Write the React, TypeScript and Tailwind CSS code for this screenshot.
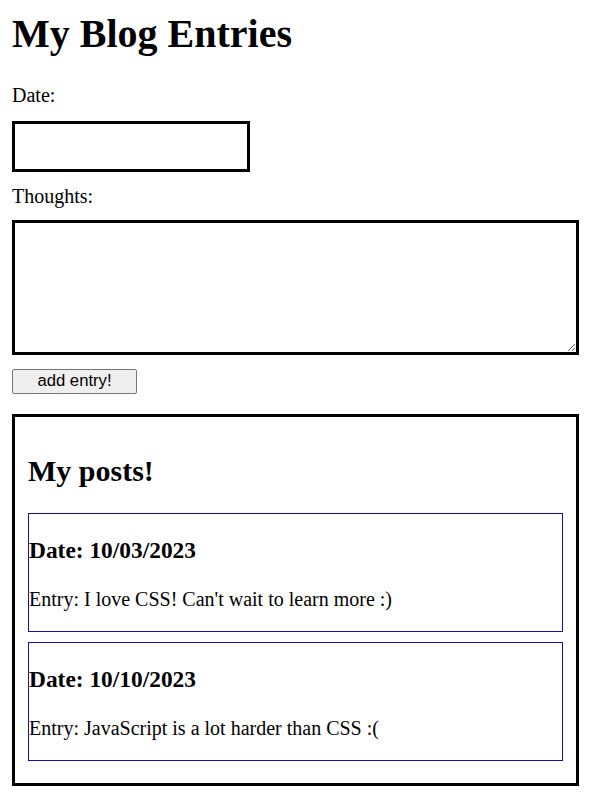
import React from "react";

const posts = [
  { date: "10/03/2023", entry: "I love CSS! Can't wait to learn more :)" },
  { date: "10/10/2023", entry: "JavaScript is a lot harder than CSS :(" },
];

export default function App() {
  return (
    <div className="min-h-[810px] bg-white pl-[12px] pt-[11px] text-black font-['Liberation_Serif','Times_New_Roman',serif]">
      <h1 className="text-[40px] font-bold leading-[46px]">My Blog Entries</h1>
      <label className="mt-[27px] block text-[20px] leading-[23px]">Date:</label>
      <input
        type="text"
        className="mt-[14px] block h-[51px] w-[238px] border-[3px] border-solid border-black bg-white outline-none"
      />
      <label className="mt-[13px] block text-[20px] leading-[23px]">Thoughts:</label>
      <textarea className="mt-[12px] block h-[135px] w-[567px] border-[3px] border-solid border-black bg-white outline-none" />
      <button
        type="button"
        className="mt-[14px] flex h-[25px] w-[125px] items-center justify-center rounded-[2px] border border-solid border-[#767676] bg-[#efefef] text-[16.67px] leading-none font-['Liberation_Sans',Arial,sans-serif]"
      >
        add entry!
      </button>
      <section className="mt-[20px] w-[567px] border-[3px] border-solid border-black px-[13px] pt-[37px] pb-[22px]">
        <h2 className="text-[30px] font-bold leading-[34px]">My posts!</h2>
        <div className="mt-[25px] flex flex-col gap-[10px]">
          {posts.map((p) => (
            <div key={p.date} className="border border-solid border-[#1414a0] pt-[23px] pb-[20px]">
              <h3 className="text-[23.4px] font-bold leading-[27px]">Date: {p.date}</h3>
              <p className="mt-[24px] text-[20px] leading-[23px]">Entry: {p.entry}</p>
            </div>
          ))}
        </div>
      </section>
    </div>
  );
}
